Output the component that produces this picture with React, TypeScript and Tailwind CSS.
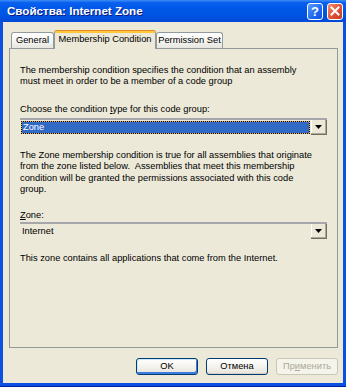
function Tab({ label, width, active }: { label: string; width: string; active?: boolean }) {
  if (active) {
    return (
      <div
        className={`${width} h-[19px] relative z-10 -mb-px bg-[#ECE9D8] border-x border-[#919B9C] rounded-t-[3px] flex flex-col`}
      >
        <div className="h-[1px] bg-[#E68B2C] rounded-t-[3px]" />
        <div className="h-[2px] bg-[#FFC73C]" />
        <div className="flex-1 flex items-center justify-center text-[9.3px] text-black pb-[2px]">{label}</div>
      </div>
    );
  }
  return (
    <div
      className={`${width} h-[16px] border border-b-0 border-[#919B9C] rounded-t-[3px] bg-[linear-gradient(to_bottom,#FFFFFF,#F3F3EF_60%,#E6E5DE)] flex items-center justify-center text-[9.3px] text-black`}
    >
      {label}
    </div>
  );
}

function ArrowButton() {
  return (
    <div className="w-[16px] h-full bg-[#ECE9D8] border-r border-b border-[#716F64] shadow-[inset_-1px_-1px_0_#ACA899,inset_1px_0_0_#FFFFFF] flex items-center justify-center">
      <svg width="7" height="4" viewBox="0 0 7 4">
        <path d="M0 0h7L3.5 4z" fill="#000" />
      </svg>
    </div>
  );
}

function Button({ children, variant }: { children: React.ReactNode; variant?: "default" | "disabled" }) {
  if (variant === "disabled") {
    return (
      <div className="w-[62px] h-[17px] rounded-[3px] border border-[#C9C7BA] bg-[#F5F4EA] flex items-center justify-center text-[9.3px] text-[#ACA899]">
        {children}
      </div>
    );
  }
  const ring =
    variant === "default"
      ? "shadow-[inset_-1px_-2px_0_#3D7BDF,inset_1px_1px_0_#CEE7FF]"
      : "shadow-[inset_0_-1px_0_#D6D0C5]";
  return (
    <div
      className={`w-[62px] h-[17px] rounded-[3px] border border-[#003C74] bg-[linear-gradient(to_bottom,#FFFFFF,#F4F3EE_50%,#E6E3DA)] ${ring} flex items-center justify-center text-[9.3px] text-black`}
    >
      {children}
    </div>
  );
}

export default function App() {
  return (
    <div className="w-[346px] h-[387px] flex flex-col bg-[#0B50E0] border-b border-[#001F9C] font-['Liberation_Sans',Arial,sans-serif] overflow-hidden">
      {/* title bar */}
      <div className="h-[22px] shrink-0 flex items-center pl-[7px] pr-[3px] bg-[linear-gradient(to_bottom,#3D8EF6_0%,#0A5FEE_12%,#0058E8_40%,#0054E3_70%,#0048D6_100%)]">
        <span className="flex-1 text-white font-bold text-[11.6px] [text-shadow:1px_1px_0_#0A1C7E]">
          Свойства: Internet Zone
        </span>
        <div className="w-[16px] h-[17px] rounded-[3px] border border-white bg-[linear-gradient(to_bottom_right,#5C9DFF,#1F68F0_60%,#1050D8)] flex items-center justify-center text-white font-bold text-[13px] leading-none">
          ?
        </div>
        <div className="w-[16px] h-[17px] ml-[4px] rounded-[3px] border border-white bg-[linear-gradient(to_bottom_right,#F0906E,#E0563A_50%,#C8391E)] flex items-center justify-center">
          <svg width="10" height="10" viewBox="0 0 10 10">
            <path d="M1.5 1.5l7 7M8.5 1.5l-7 7" stroke="#fff" strokeWidth="2" strokeLinecap="square" />
          </svg>
        </div>
      </div>

      {/* body */}
      <div className="flex-1 mx-[3px] mb-[3px] bg-[#ECE9D8] flex flex-col pt-[7px] pl-[6px] pr-[5px]">
        <div className="flex items-end pl-[2px] h-[19px]">
          <Tab label="General" width="w-[43px]" />
          <Tab label="Membership Condition" width="w-[102px]" active />
          <Tab label="Permission Set" width="w-[67px]" />
        </div>

        <div className="flex-1 border border-[#919B9C] bg-[#ECE9D8] px-[10px] pt-[16px] text-[9.3px] leading-[11px] text-black">
          <p>
            The membership condition specifies the condition that an assembly
            <br />
            must meet in order to be a member of a code group
          </p>

          <p className="mt-[17px]">
            Choose the condition <span className="underline">t</span>ype for this code group:
          </p>
          <div className="mt-[3px] h-[17px] flex border-t-2 border-[#A7A6AA]">
            <div className="flex-1 pt-[1px] pl-[1px] pr-[1px] pb-[1px]">
              <div className="h-full bg-[#E8B448] border border-dotted border-black">
                <div className="h-full bg-[#316AC5] text-white flex items-center pl-[1px]">Zone</div>
              </div>
            </div>
            <ArrowButton />
          </div>

          <p className="mt-[15px] leading-[11.3px]">
            The Zone membership condition is true for all assemblies that originate
            <br />
            from the zone listed below.&nbsp; Assemblies that meet this membership
            <br />
            condition will be granted the permissions associated with this code
            <br />
            group.
          </p>

          <p className="mt-[15px]">
            <span className="underline">Z</span>one:
          </p>
          <div className="mt-[1px] h-[17px] flex border-t-2 border-[#A7A6AA]">
            <div className="flex-1 flex items-center pl-[2px]">Internet</div>
            <ArrowButton />
          </div>

          <p className="mt-[14px]">This zone contains all applications that come from the Internet.</p>
        </div>

        <div className="mt-[10px] mb-[8px] flex justify-end gap-[8px]">
          <Button variant="default">OK</Button>
          <Button>Отмена</Button>
          <Button variant="disabled">
            Пр<span className="underline">и</span>менить
          </Button>
        </div>
      </div>
    </div>
  );
}
